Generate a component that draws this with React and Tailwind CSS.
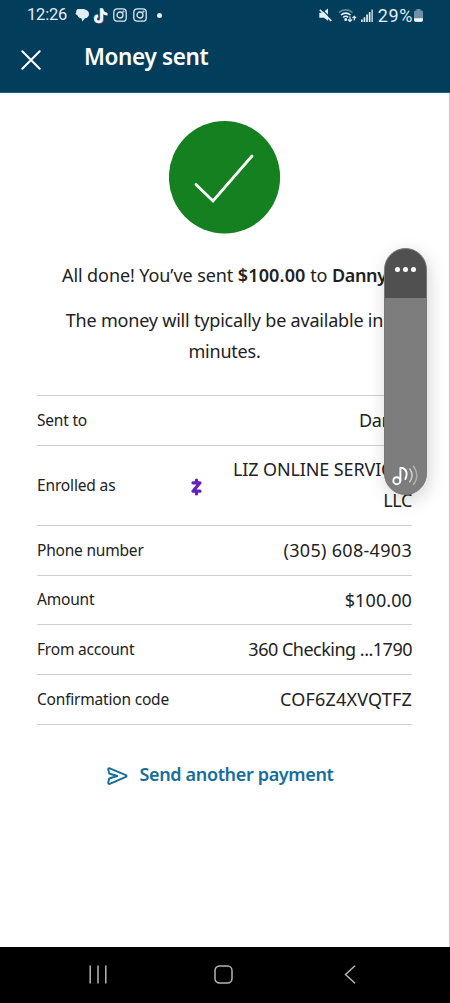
import React from "react";

const rows = [
  { label: "Sent to", value: "Danny", height: "h-[50px]", track: "tracking-[-0.35px]" },
  { label: "Phone number", value: "(305) 608-4903", height: "h-[50px]", track: "tracking-[0.3px]" },
  { label: "Amount", value: "$100.00", height: "h-[49px]", track: "tracking-[0.1px]" },
  { label: "From account", value: "360 Checking ...1790", height: "h-[50px]", track: "tracking-[-0.5px]" },
  { label: "Confirmation code", value: "COF6Z4XVQTFZ", height: "h-[50px]", track: "tracking-[0.2px]" },
];

function Row({ row }) {
  return (
    <div className={`flex items-center justify-between border-b border-[#cfcfcf] ${row.height}`}>
      <span className="whitespace-nowrap text-[15.5px] tracking-[-0.2px]">{row.label}</span>
      <span className={`whitespace-nowrap text-[18px] ${row.track}`}>{row.value}</span>
    </div>
  );
}

function InstagramIcon() {
  return (
    <svg width="14" height="14" viewBox="0 0 14 14" fill="none" stroke="#d7e8f2" strokeWidth="1.3">
      <rect x="0.8" y="0.8" width="12.4" height="12.4" rx="3.3" />
      <circle cx="7" cy="7" r="3" />
      <circle cx="10.5" cy="3.5" r="0.4" />
    </svg>
  );
}

const note = "M7.2.8c.3 2.6 1.7 4 4.1 4.2v2.3c-1.5 0-2.9-.5-4.1-1.3v4.8a4.2 4.2 0 1 1-4.9-4.1v2.5a1.8 1.8 0 1 0 2.4 1.7V.8z";

function StatusBar() {
  return (
    <div className="flex h-[30px] items-center justify-between pl-[27px] pr-[27px] text-[#e2eef5]">
      <div className="flex items-center">
        <span className="w-[48px] pt-px font-['Roboto',sans-serif] text-[16.5px] tracking-[-0.2px]">12:26</span>
        <svg className="mr-[4px]" width="14" height="14" viewBox="0 0 14 14" fill="currentColor">
          <path d="M3 1h5.5c1 0 1.6.3 2 .8C12.7 2.2 14 3.8 14 6c0 2.5-1.8 4.2-4 4.3L7.3 13.4 6.6 10.5C4.4 10.2 3 9.4 2.6 7.6L.2 5.8l1-.8C1 3 1.5 1.3 3 1z" />
        </svg>
        <svg className="mr-[4px]" width="16" height="17" viewBox="0 0 16 17">
          <g transform="translate(2.6 .7) scale(1.03)">
            <path d={note} fill="#44dfe2" transform="translate(-.7 -.4)" />
            <path d={note} fill="#ef4a72" transform="translate(.7 .4)" />
            <path d={note} fill="#fff" />
          </g>
        </svg>
        <InstagramIcon />
        <span className="w-[6px]" />
        <InstagramIcon />
        <span className="ml-[10px] h-[5px] w-[5px] rounded-full bg-[#e2eef5]" />
      </div>
      <div className="flex items-center">
        <svg className="mr-[6px]" width="13" height="14" viewBox="0 0 13 14">
          <path d="M.3 4.7h3.2L9 .6v12.2L5 9.7H.3z" fill="currentColor" />
          <path d="m2 .6 11 10.7" stroke="#033d5c" strokeWidth="1.3" />
          <path d="m.8 1.7 11.5 11.2" stroke="currentColor" strokeWidth="1.6" />
        </svg>
        <svg className="mr-[4px]" width="19" height="15" viewBox="0 0 19 15" fill="none" stroke="currentColor" strokeWidth="1.6">
          <path d="M1 4.5a10 10 0 0 1 13.5 0" opacity=".45" />
          <path d="M3 7a7 7 0 0 1 9.5 0M5.2 9.3a3.8 3.8 0 0 1 5 0" />
          <circle cx="7.7" cy="11.5" r=".7" fill="currentColor" />
          <path d="M12 8.5v5m-2-2 2 2 2-2M16.3 12.5v-4m-1.8 1.6 1.8-1.8 1.8 1.8" strokeWidth="1.2" />
        </svg>
        <svg className="mr-[5px]" width="12" height="13" viewBox="0 0 12 13" fill="currentColor">
          <path d="M0 10.5h1.7V13H0zM2.6 8.2h1.7V13H2.6zM5.2 5.6h1.7V13H5.2zM7.8 3h1.7v10H7.8z" />
          <path d="M10.3.5H12V13h-1.7z" opacity=".75" />
        </svg>
        <span className="font-['Roboto',sans-serif] text-[18px] tracking-[0.6px]">29%</span>
        <svg className="ml-px" width="9" height="13" viewBox="0 0 9 13">
          <path d="M2.5 0h4v1.4h1a1.5 1.5 0 0 1 1.5 1.5V11a1.7 1.7 0 0 1-1.7 1.7H1.7A1.7 1.7 0 0 1 0 11V2.9a1.5 1.5 0 0 1 1.5-1.5h1z" fill="#6f91a5" />
          <path d="M0 9.2h9V11a1.7 1.7 0 0 1-1.7 1.7H1.7A1.7 1.7 0 0 1 0 11z" fill="#f4f9fb" />
        </svg>
      </div>
    </div>
  );
}

function VolumePanel() {
  return (
    <div className="absolute left-[384px] top-[248px] flex h-[247px] w-[43px] flex-col items-center justify-between overflow-hidden rounded-full border border-[#777] bg-[#7d7d7d] shadow-[2px_5px_18px_rgba(0,0,0,0.17)]">
      <div className="flex h-[49px] w-full items-center justify-center gap-[3px] bg-[#505050] pb-[9px]">
        <span className="h-[5px] w-[5px] rounded-full bg-white" />
        <span className="h-[5px] w-[5px] rounded-full bg-white" />
        <span className="h-[5px] w-[5px] rounded-full bg-white" />
      </div>
      <svg className="mb-[7px]" width="27" height="24" viewBox="0 0 27 24" fill="none" strokeLinecap="round" strokeLinejoin="round">
        <circle cx="4.8" cy="17.7" r="3.5" stroke="#fff" strokeWidth="1.9" />
        <path d="M8.4 17.5V5h2.2c2.4.8 4 3.2 4 6.2 0 1.9-.5 3.4-1.3 4.7" stroke="#fff" strokeWidth="1.9" />
        <path d="M17.8 6c3 3.8 3 9 0 12.8" stroke="#ccc" strokeWidth="1.6" />
        <path d="M21.5 3.3c4.3 5.7 4.3 12.6 0 18.2" stroke="#b0b0b0" strokeWidth="1.6" />
      </svg>
    </div>
  );
}

export default function App() {
  return (
    <div className="relative flex h-[1003px] w-[450px] flex-col overflow-hidden bg-white font-['Noto_Sans',sans-serif] text-[#222]">
      <header className="h-[93px] border-b border-[#255d7b] bg-[#033d5c]">
        <StatusBar />
        <div className="flex h-[56px] items-center pl-[21px] text-white">
          <svg width="20" height="20" viewBox="0 0 20 20" stroke="currentColor" strokeWidth="2" strokeLinecap="round" className="mt-[4px]">
            <path d="m1.3 1.3 17.4 17.4M18.7 1.3 1.3 18.7" />
          </svg>
          <h1 className="ml-[43px] whitespace-nowrap pb-[2px] text-[22.5px] font-semibold tracking-[-0.35px]">Money sent</h1>
        </div>
      </header>
      <main className="flex h-[854px] flex-col items-center border-r border-[#c9c9c9]">
        <svg className="mt-[28px] shrink-0" width="112" height="113" viewBox="0 0 112 113">
          <ellipse cx="55.5" cy="56.3" rx="55.6" ry="56.3" fill="#14801f" />
          <path d="M27 63.5 44 80 83 35" fill="none" stroke="#fff" strokeWidth="2.8" strokeLinecap="round" />
        </svg>
        <p className="mt-[26px] flex h-[31px] w-[325px] items-center whitespace-pre text-[18px] tracking-[-0.09px]">
          <span>All done! You’ve sent <b className="font-semibold tracking-[0.15px]">$100.00</b> to <b className="font-semibold tracking-[-0.35px]">Danny.</b></span>
        </p>
        <p className="mt-[14px] w-[330px] text-center text-[18px] leading-[31px] tracking-[-0.2px]">
          <span className="whitespace-nowrap">The money will typically be available in</span> minutes.
        </p>
        <section className="mt-[28px] w-[375px] border-t border-[#cfcfcf]">
          <Row row={rows[0]} />
          <div className="flex h-[80px] items-center border-b border-[#cfcfcf]">
            <span className="text-[15.5px] tracking-[-0.15px]">Enrolled as</span>
            <svg className="ml-auto mr-[26px] mt-[2px]" width="11" height="18" viewBox="0 0 11 18" fill="none" stroke="#6420bd" strokeWidth="3.2" strokeLinecap="round" strokeLinejoin="round">
              <path d="M2 4.8h7L2 13.2h7M5.5 2v2M5.5 14v2" />
            </svg>
            <span className="w-[184px] pb-px text-right text-[18px] leading-[31px] tracking-[-0.13px]">
              <span className="whitespace-nowrap">LIZ ONLINE SERVICES</span> <span className="tracking-[-0.4px]">LLC</span>
            </span>
          </div>
          {rows.slice(1).map((row) => <Row key={row.label} row={row} />)}
        </section>
        <button className="mr-[8px] mt-[36px] flex items-center text-[#156f98]">
          <svg className="mr-[11px] mt-[2px]" width="21" height="20" viewBox="0 0 21 20" fill="none" stroke="currentColor" strokeWidth="1.9" strokeLinejoin="round">
            <path d="M2 2.2c-.6 0-.8.5-.8 1l1 4.3 8 2.5-8 2.5-1 4.2c0 1 .6 1.5 1.5 1.1l16.2-7c.9-.4.9-1.2 0-1.6L2.8 2.3A2 2 0 0 0 2 2.2z" />
          </svg>
          <span className="whitespace-nowrap text-[18px] font-semibold tracking-[-0.35px]">Send another payment</span>
        </button>
      </main>
      <VolumePanel />
      <nav className="flex h-[56px] items-center bg-black pb-[2px] pl-[89px] text-[#b5b5b5]">
        <svg width="18" height="19" viewBox="0 0 18 19" stroke="currentColor" strokeWidth="1.5"><path d="M1.2.5v18M9 .5v18M16.8.5v18" /></svg>
        <svg className="ml-[107px]" width="19" height="19" viewBox="0 0 19 19" fill="none" stroke="currentColor" strokeWidth="1.5"><rect x="1" y="1" width="17" height="17" rx="4.5" /></svg>
        <svg className="ml-[111px]" width="12" height="19" viewBox="0 0 12 19" fill="none" stroke="currentColor" strokeWidth="1.5"><path d="M11 .7 1.5 9.5l9.5 8.8" /></svg>
      </nav>
    </div>
  );
}
